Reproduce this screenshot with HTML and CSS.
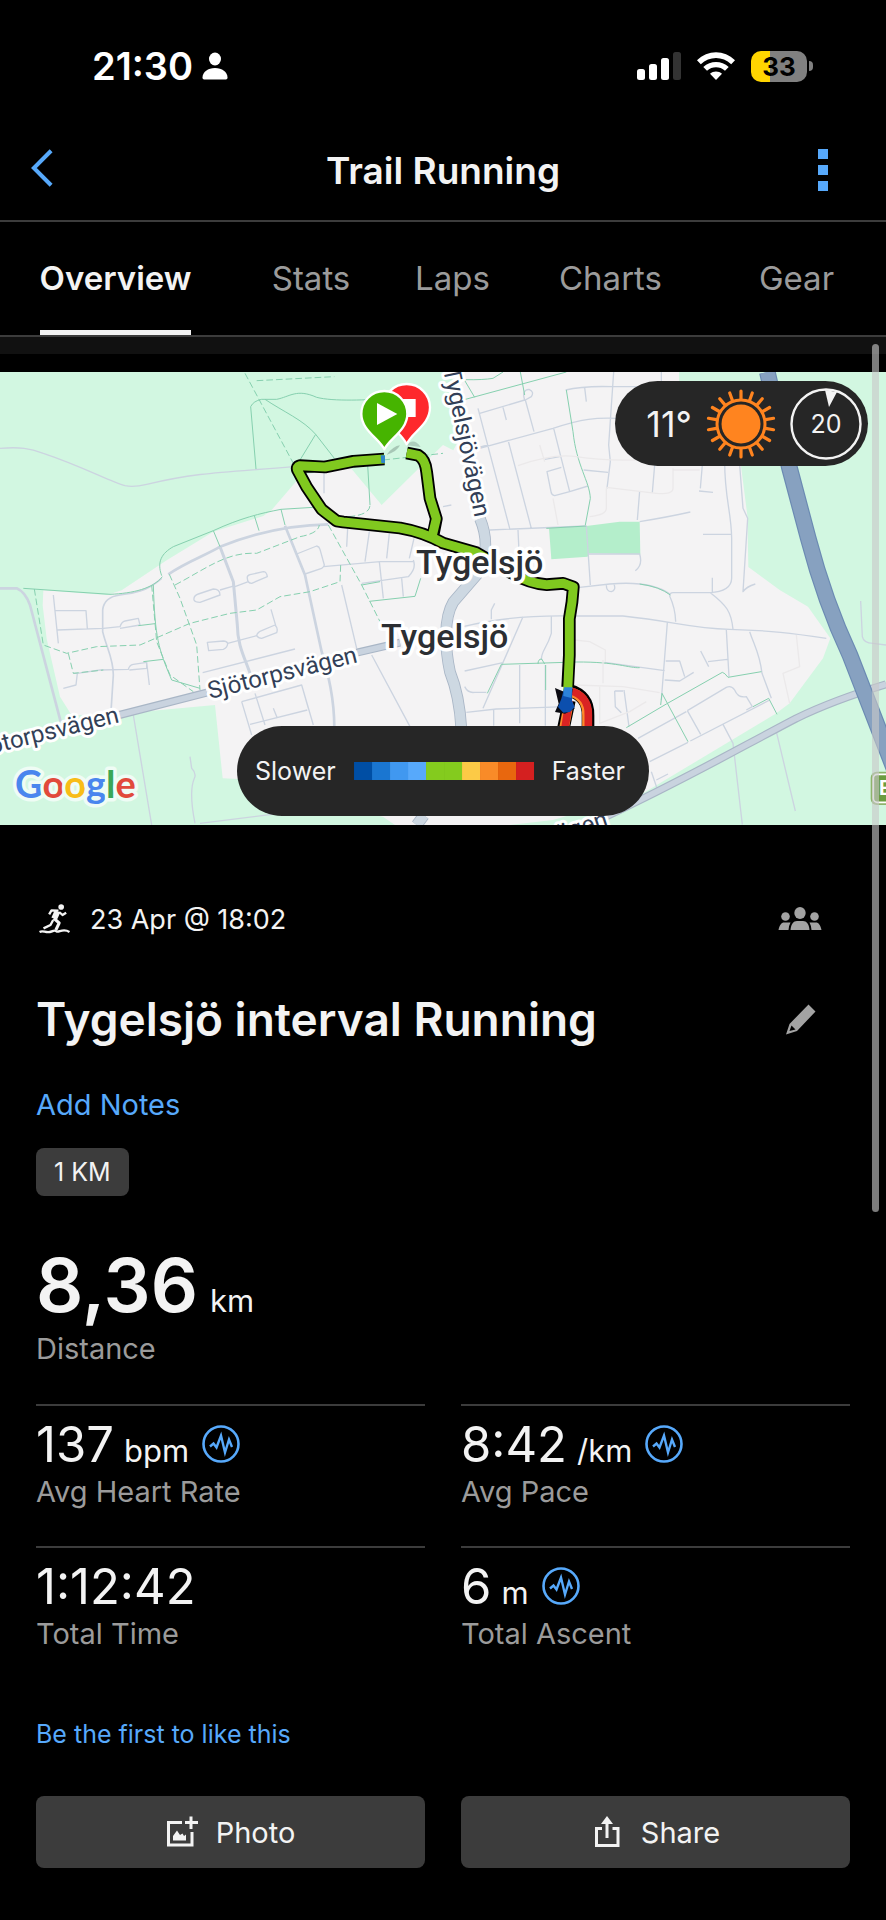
FILE: index.html
```html
<!DOCTYPE html>
<html lang="en">
<head>
<meta charset="utf-8">
<meta name="viewport" content="width=device-width, initial-scale=1">
<title>Trail Running</title>
<link rel="stylesheet" href="styles.css">
</head>
<body>
<svg class="defs" aria-hidden="true">
  <symbol id="pulse" viewBox="0 0 38 38">
    <circle cx="19" cy="19" r="17.5" fill="none" stroke="currentColor" stroke-width="2.6"/>
    <path d="M8 21.500l3.500-3 3 4 4.500-12 4 17 4-13 3 7.500" fill="none" stroke="currentColor" stroke-width="2.400" stroke-linejoin="miter"/>
  </symbol>
</svg>

<header class="top">
  <div class="status">
    <div class="status-left">
      <span class="clock">21:30</span>
      <svg class="person" viewBox="0 0 26 28" fill="#fff"><ellipse cx="13" cy="7" rx="6" ry="6.500"/><path d="M0.500 25.500C.5 20 6 16 13 16s12.500 4 12.500 9.500c0 1.500-.8 2-2.500 2H3c-1.700 0-2.500-.5-2.500-2z"/></svg>
    </div>
    <div class="status-right">
      <svg class="signal" viewBox="0 0 44 28"><g fill="#fff"><rect y="17" width="8" height="11" rx="2.500"/><rect x="12" y="12" width="8" height="16" rx="2.500"/><rect x="24" y="6" width="8" height="22" rx="2.500"/></g><rect x="36" width="8" height="28" rx="2.500" fill="#333"/></svg>
      <svg class="wifi" viewBox="0 0 38 28" fill="#fff"><path d="M19 28l-6-6.200c3.400-3 8.600-3 12 0z"/><path d="M6.300 14.900C13.500 8.300 24.500 8.300 31.700 14.900L28 18.700c-5.200-4.500-12.800-4.500-18 0z"/><path d="M0 8.300C10.700-2.600 27.300-2.600 38 8.300L34.200 12.200C25.600 4 12.400 4 3.800 12.200z"/></svg>
      <div class="battery"><span class="battery-body">33</span><span class="battery-cap"></span></div>
    </div>
  </div>
  <div class="bar">
    <button class="icon-button" aria-label="Back"><svg class="chevron" viewBox="0 0 24 40"><path d="M21 2L3 20l18 18" fill="none" stroke="#57a9fb" stroke-width="4.200"/></svg></button>
    <h1 class="bar-title">Trail Running</h1>
    <button class="icon-button" aria-label="More options"><svg class="dots" viewBox="0 0 10 42" fill="#57a9fb"><rect width="10" height="10"/><rect y="16" width="10" height="10"/><rect y="32" width="10" height="10"/></svg></button>
  </div>
  <nav class="tabs">
    <a class="tab tab-active" href="#overview">Overview</a>
    <a class="tab" href="#stats">Stats</a>
    <a class="tab" href="#laps">Laps</a>
    <a class="tab" href="#charts">Charts</a>
    <a class="tab" href="#gear">Gear</a>
  </nav>
</header>

<main class="page" id="overview">
  <div class="scroll-thumb"></div>
  <div class="strip"></div>
  <section class="map" aria-label="Route map">
    <svg class="map-art" viewBox="0 0 886 453">
      <rect width="886" height="453" fill="#f4f3f4"/>
      <g transform="scale(.33333333)" fill="none" stroke-linejoin="round">
        <g fill="#d2f7e1">
          <path d="M0 0H1345L1385 70 1405 150 1360 235 1329 219 1255 290 1145 399 1050 285 900 310 885 332 815 414 790 432 640 479 500 565 365 655 320 669 130 655 128 700 140 800 180 974 215 1030 360 1025 645 999 668 1219 730 1222 1150 1335 1185 1359H0Z"/>
          <path d="M2037 0H2658V1359H1529L1659 1344 1929 1264 2329 1024 2369 994 2469 859 2491 799 2424 704 2339 654 2245 585 2242 430 2223 282 2150 120 2037 60Z"/>
        </g>
        <path d="M1647 469L1759 462 1859 449 1919 449 1921 547 1766 544 1763 554 1654 562Z" fill="#b4eecb"/>

        <g transform="translate(0 -21)" stroke="#ccd4e0" stroke-width="4">
          <path d="M0 250C60 245 90 250 130 265C250 305 330 350 375 362Q400 368 440 358C600 320 680 322 880 305"/>
          <path d="M505 628C560 590 620 570 660 545C760 505 860 480 985 478" stroke-width="8"/>
          <path d="M660 545L700 650 712 780C712 840 735 880 750 925" stroke-width="9"/>
          <path d="M855 482L915 630 965 860C985 930 1003 1000 1003 1090" stroke-width="8"/>
          <path d="M0 670H50Q75 680 90 720L182 1070" stroke-width="8"/>
          <path d="M890 567L950 543Q958 545 960 553L973 600Q972 606 965 610L915 627M970 605L1140 590H1240M1043 490L1040 545M1108 500L1095 590M1168 505L1160 580M1242 520L1228 580M1240 585Q1250 610 1225 635L1085 655M1138 590L1150 700M1205 640L1210 695M972 320V385M1025 660L1070 850"/>
          <path d="M705 665L745 650M742 640Q740 632 750 629L790 620Q800 620 802 635L755 655Q743 655 742 640ZM582 705Q580 692 595 687L640 672Q660 672 660 690L600 712Q585 712 582 705ZM660 675L705 662"/>
          <path d="M485 640C440 680 400 685 360 690C320 695 310 715 308 735V800C320 850 340 880 340 930L333 1040" stroke-width="5"/>
          <path d="M160 690L175 835M165 737H258L262 790M172 795L310 790 360 785Q365 770 375 768L415 760 420 780 360 790M190 970L228 960 232 925 300 915 385 913Q388 900 400 898L440 892V910L388 915M440 892L448 960M220 925H232"/>
          <path d="M608 923L885 852M683 835Q680 828 670 828L622 832 626 857 670 853Q683 848 683 835L770 812Q772 802 785 797L825 780Q835 790 830 803L785 820Q775 820 770 812M828 785L813 733"/>
          <path d="M725 1010L905 960 940 1080M725 1010L755 1110M750 1078L922 1035M765 985L795 1080M820 1030L832 1060M905 960L925 1030"/>
          <path d="M400 1050L455 1380M570 1175L575 1210Q590 1225 583 1240C570 1270 572 1310 585 1375M600 1375L840 1345M1115 870L1230 1085"/>
        </g>
        <g transform="translate(0 -21)" stroke="#86d0af" stroke-width="3">
          <path d="M768 312L752 125Q760 108 785 103H830C870 95 890 70 950 97C1000 110 1100 105 1180 100M795 103C850 140 910 165 947 208L1003 280M947 208L900 285M485 632C470 590 485 565 520 545L640 497C720 460 780 445 843 433L940 427M640 497L660 545M763 452L777 497M843 433L855 480M487 635C460 670 400 685 330 688L70 670M1103 300L1110 420"/>
          <path d="M735 25L880 295M770 47L1003 35M985 480L1085 660 1140 770M525 660C620 610 680 560 770 565L900 515Q955 505 958 480M1045 455Q1110 450 1110 420M1150 285L1329 265M103 672L130 840 200 865 290 845 420 840 570 775 690 745 770 735 840 695 930 680 1020 650 1022 600M508 628L540 700 590 840 600 975M455 660L470 830 510 930 580 980M205 865L220 925 310 915" stroke-dasharray="20 9"/>
          <path d="M460 660C465 820 475 850 515 945L600 970M415 782L465 776M430 890L490 883M1085 660L1140 650M1108 709L1245 694 1262 640" />
        </g>

        <g transform="translate(1329 -21)" stroke="#ccd4e0" stroke-width="4">
          <path d="M110 145L245 105Q235 75 258 73Q275 80 265 95L247 105 273 200M105 130L200 490M110 250L330 190C420 160 460 158 520 160M180 127L190 165M195 225L265 490M332 190L380 380L335 392Q325 390 324 380L312 320 355 307M305 283L350 275M380 380L435 363M425 68L430 110M368 75Q420 62 510 65H660M512 21L497 240 502 290 492 370M422 315L495 322M655 21V60M635 300L628 383M768 378L810 382M778 300L772 370M590 378L583 465M590 470Q680 455 742 441M140 495L430 483M225 495L228 560M430 483L442 660M437 567H590Q600 600 577 617M780 508H865M845 290C845 400 865 440 866 520V640Q865 680 800 683H690Q680 683 680 693Q697 730 698 770M802 683C850 720 865 740 870 793M808 638V683M890 300L900 430 914 460 900 680Q910 665 937 657M410 667L500 657C600 648 650 665 682 688M490 660Q490 680 505 680Q520 675 513 657M0 425L25 420M95 250L135 240"/>
          <path d="M370 75L390 200C400 300 440 350 442 400L427 480M68 44Q120 45 150 40L180 21M60 105L370 21M232 21L245 90M310 490L430 483M590 657Q650 665 682 690M50 21L95 97" stroke="#86d0af" stroke-width="3"/>
          <path d="M225 302Q330 265 400 275C500 290 600 285 620 283M345 480L330 400M290 240L305 290M490 370V430Q490 450 440 455M490 367L640 385Q690 390 690 370V310M690 315H770" stroke="#ebe9ea"/>
        </g>
        <g transform="translate(1329 654)" stroke="#ccd4e0" stroke-width="4">
          <path d="M60 110Q200 75 380 78H540C700 95 740 115 860 118S1050 130 1150 145M145 88V60L155 40M240 80L120 355M325 78V130C310 180 295 180 295 210M65 243L180 218M65 290Q75 310 95 307H130M70 367L160 357 370 350M152 360V407M230 225V400M307 225V407M673 98L655 330M668 213H710L725 260M665 270L710 273 752 247M773 183L797 230M795 215L853 208M850 120L858 260M920 125C935 170 950 190 957 250L985 325M485 217L665 242M543 300L558 410M515 303H540M515 303L517 350 535 368M585 445L730 365M733 362L850 292Q865 285 875 300Q885 325 910 320L928 350 910 360M733 362L773 433M742 453L980 330M620 515L735 457M840 403L870 460L898 704M640 570L675 552M625 545L642 595M1000 425L1057 663M1253 33L1258 140Q1262 160 1290 160L1329 165"/>
          <path d="M175 223L400 216C520 215 560 235 590 233M175 223L133 310M285 222Q285 207 296 207L305 222M308 225V300M653 345L657 310 735 455M550 413L670 342 838 247Q845 248 855 262L955 245M930 350L977 325 1002 373" stroke="#86d0af" stroke-width="3"/>
          <path d="M395 150L440 155 487 180V215M480 210V280M395 285L540 290 650 308M470 290V400L560 365 610 335M1060 135L1070 230 1020 250 1040 340" stroke="#ebe9ea"/>
        </g>

        <g stroke-linecap="butt">
          <path d="M1440 440C1465 500 1460 560 1430 609L1360 690C1330 740 1335 830 1350 900C1370 950 1380 1000 1384 1070M1272 1330L1250 1359" stroke="#a9b6c6" stroke-width="35"/>
          <path d="M1440 440C1465 500 1460 560 1430 609L1360 690C1330 740 1335 830 1350 900C1370 950 1380 1000 1384 1070M1272 1330L1250 1359" stroke="#cdd8e2" stroke-width="30"/>
          <path d="M358 1029L620 962M1070 842L1200 812M2658 937Q2500 985 2389 1039C2200 1138 2050 1225 1800 1342" stroke="#a9b6c6" stroke-width="24"/>
          <path d="M358 1029L620 962M1070 842L1200 812M2658 937Q2500 985 2389 1039C2200 1138 2050 1225 1800 1342" stroke="#c9d3df" stroke-width="17"/>
          <path d="M2302 0L2367 282 2425 500Q2475 690 2550 850L2690 1210" stroke="#6b8ab2" stroke-width="50"/>
          <path d="M2302 0L2367 282 2425 500Q2475 690 2550 850L2690 1210" stroke="#87a1c0" stroke-width="43"/>
        </g>

        <path d="M1708 955C1745 965 1765 990 1764 1030V1080M1708 985L1688 1080" stroke="#000" stroke-width="38"/>
        <path d="M1708 960C1740 965 1762 990 1761 1030V1080M1706 995L1690 1080" stroke="#fd8a2a" stroke-width="29"/>
        <path d="M1708 955C1745 965 1767 990 1765 1030V1080M1708 985L1693 1080" stroke="#d92323" stroke-width="23"/>
        <path d="M1153 261L1060 268 975 285 900 281Q888 284 893 295L920 345 965 412 1010 447 1030 450 1200 468Q1270 480 1329 513L1429 542 1529 600Q1590 636 1640 638L1690 634 1720 645 1716 690 1708 740 1708 850 1703 945M1220 243L1255 250Q1276 262 1280 300L1290 379 1309 440 1300 485" stroke="#000" stroke-width="38"/>
        <path d="M1153 261L1060 268 975 285 900 281Q888 284 893 295L920 345 965 412 1010 447 1030 450 1200 468Q1270 480 1329 513L1429 542 1529 600Q1590 636 1640 638L1690 634 1720 645 1716 690 1708 740 1708 850 1703 957M1220 243L1255 250Q1276 262 1280 300L1290 379 1309 440 1297 490" stroke="#80c91f" stroke-width="27"/>
        <path d="M1142 250H1155V273H1144Z" fill="#2f86c9"/>
        <path d="M1665 948L1694 960 1718 950 1712 990 1724 1010 1695 1025 1665 1020 1676 995Z" fill="#0b0b12"/>
        <path d="M1692 950H1717L1716 985 1724 1005 1710 1020 1690 1022 1674 1005 1684 980Z" fill="#0c4fae"/>
        <path d="M1692 946H1717L1714 978 1690 972Z" fill="#2c83da"/>

        <path d="M1160 248Q1180 222 1200 220Q1190 240 1160 248Z" fill="#8aa79a" opacity=".6"/>
        <path d="M1220 220Q1240 195 1262 225Z" fill="#8aa79a" opacity=".5"/>
        <path d="M1220 217C1205 180 1150 160 1150 106a70 70 0 0 1 140 0C1290 160 1235 180 1220 217Z" fill="#fe282c" stroke="#fff" stroke-width="7"/>
        <path d="M1193 81h54v54h-54z" fill="#fff"/>
        <path d="M1153 232C1138 200 1084 175 1084 126a69 69 0 0 1 138 0C1222 175 1168 200 1153 232Z" fill="#46b400" stroke="#fff" stroke-width="7"/>
        <path d="M1131 93L1192 126 1131 159Z" fill="#fff"/>
        <rect x="2612" y="1199" width="90" height="100" rx="18" fill="#8fb36c"/>
        <rect x="2620" y="1207" width="80" height="84" rx="12" fill="#6c9c41" stroke="#fff" stroke-width="5"/>
      </g>
      <g class="road-label">
        <text transform="translate(443 -3) rotate(78)">Tygelsjövägen</text>
        <text transform="translate(210 327) rotate(-14)">Sjötorpsvägen</text>
        <text transform="translate(120 350) rotate(-14)" text-anchor="end">Sjötorpsvägen</text>
        <text transform="translate(609 454) rotate(-18)" text-anchor="end">vägen</text>
      </g>
      <g class="place-label">
        <text x="416" y="202">Tygelsjö</text>
        <text x="381" y="276">Tygelsjö</text>
      </g>
      <text class="shield" x="879" y="423">E</text>
      <text class="brand" x="15" y="426"><tspan fill="#4a86ee">G</tspan><tspan fill="#e14a3c">o</tspan><tspan fill="#f8bd17">o</tspan><tspan fill="#4a86ee">g</tspan><tspan fill="#3aa757">l</tspan><tspan fill="#e14a3c">e</tspan></text>
    </svg>
    <div class="weather">
      <span class="temp">11°</span>
      <svg class="sun" viewBox="-35 -35 70 70"><circle r="19.500" fill="#ff841f"/><circle r="24" fill="none" stroke="#ff841f" stroke-width="3"/><g stroke="#ff841f" stroke-width="3.200" stroke-linecap="round"><path d="M0-25V-33M0 25V33"/><path d="M0-25V-33M0 25V33" transform="rotate(20)"/><path d="M0-25V-33M0 25V33" transform="rotate(40)"/><path d="M0-25V-33M0 25V33" transform="rotate(60)"/><path d="M0-25V-33M0 25V33" transform="rotate(80)"/><path d="M0-25V-33M0 25V33" transform="rotate(100)"/><path d="M0-25V-33M0 25V33" transform="rotate(120)"/><path d="M0-25V-33M0 25V33" transform="rotate(140)"/><path d="M0-25V-33M0 25V33" transform="rotate(160)"/></g></svg>
      <div class="wind">
        <svg class="wind-ring" viewBox="0 0 72 72"><circle cx="36" cy="36" r="34.500" fill="none" stroke="#f3f3f3" stroke-width="2.400"/><path d="M35 2L47 4 39 19Z" fill="#f3f3f3"/></svg>
        <span class="wind-value">20</span>
      </div>
    </div>
    <div class="legend">
      <span>Slower</span>
      <div class="ramp"><i class="c1"></i><i class="c2"></i><i class="c3"></i><i class="c4"></i><i class="c5"></i><i class="c5"></i><i class="c6"></i><i class="c7"></i><i class="c8"></i><i class="c9"></i></div>
      <span>Faster</span>
    </div>
  </section>

  <section class="summary">
    <div class="meta">
      <svg class="runner" viewBox="26 26 92 93"><circle cx="92" cy="35" r="8.500" fill="#f3f3f3"/><g fill="none" stroke="#f3f3f3" stroke-linejoin="round"><path d="M56 57L63 45 84 46" stroke-width="7"/><path d="M81 48L71 70" stroke-width="18"/><path d="M86 50L96 59 107 52" stroke-width="7"/><path d="M70 69L86 83 76 104" stroke-width="9"/><path d="M68 74L60 89 39 99" stroke-width="7"/><path d="M27 110C38 104 44 113 58 110S72 103 78 108 98 97 117 110" stroke-width="7"/></g></svg>
      <time class="date">23 Apr @ 18:02</time>
      <svg class="people" viewBox="0 0 44 24" fill="#a3a3a3"><ellipse cx="22" cy="6" rx="5.700" ry="6"/><path d="M12.500 23C13 17 15.500 14 19 14h6c3.500 0 6 3 6.500 9z"/><circle cx="7.500" cy="9.500" r="4.300"/><circle cx="36.500" cy="9.500" r="4.300"/><path d="M.5 23C1.500 18 3.500 15.500 6 15.500h6.500Q11 18 10.500 23zM43.500 23C42.500 18 40.500 15.500 38 15.500h-6.500Q33 18 33.500 23z"/></svg>
    </div>
    <div class="name-row">
      <h2 class="name">Tygelsjö interval Running</h2>
      <button class="icon-button" aria-label="Edit name"><svg class="pencil" viewBox="0 0 30 31"><path fill-rule="evenodd" d="M22.500 0.500L29.500 7.500 11 27 0 30.500 3.500 20zM5.500 21.500L3.500 27 9.500 25.500z" fill="#a3a3a3"/></svg></button>
    </div>
    <a class="notes" href="#notes">Add Notes</a>
    <span class="tag">1 KM</span>

    <div class="hero-value"><strong class="hero-number">8,36</strong><span class="unit">km</span></div>
    <div class="label">Distance</div>

    <div class="metrics">
      <div class="metric"><div class="value"><span class="number">137</span><span class="unit">bpm</span><svg class="pulse"><use href="#pulse"/></svg></div><div class="label">Avg Heart Rate</div></div>
      <div class="metric"><div class="value"><span class="number">8:42</span><span class="unit">/km</span><svg class="pulse"><use href="#pulse"/></svg></div><div class="label">Avg Pace</div></div>
      <div class="metric"><div class="value"><span class="number">1:12:42</span></div><div class="label">Total Time</div></div>
      <div class="metric"><div class="value"><span class="number">6</span><span class="unit">m</span><svg class="pulse"><use href="#pulse"/></svg></div><div class="label">Total Ascent</div></div>
    </div>

    <a class="likes" href="#likes">Be the first to like this</a>
    <div class="actions">
      <button class="action"><svg class="action-icon" viewBox="0 0 32 32" fill="none" stroke="#f3f3f3" stroke-width="3"><path d="M16 6.500H2.500V29H26V16M25 0.500V13M19 6.500H32"/><path d="M7 24.500V20L11 14.500 14 19 16.500 17.500 18 20 20 18.500V24.500Z" fill="#f3f3f3" stroke="none"/></svg>Photo</button>
      <button class="action"><svg class="action-icon" viewBox="0 0 32 32" fill="none" stroke="#f3f3f3" stroke-width="3"><path d="M11 12.500H5.500V29.500H27V12.500H21.500M16 22V3"/><path d="M16 0L22 8H10Z" fill="#f3f3f3" stroke="none"/></svg>Share</button>
    </div>
  </section>
</main>
</body>
</html>
```
FILE: styles.css
```css
* { box-sizing: border-box; }
body {
  margin: 0;
  background: #000;
  color: #f3f3f3;
  font-family: Inter, "Liberation Sans", sans-serif;
  font-size: 29px;
}
a { color: inherit; text-decoration: none; }
svg { display: block; flex: none; }
button { font: inherit; color: inherit; border: 0; background: none; padding: 0; }
h1, h2 { margin: 0; }
.defs { position: absolute; width: 0; height: 0; }

.status {
  display: flex;
  justify-content: space-between;
  align-items: center;
  height: 122px;
  padding: 10px 73px 0 92px;
  color: #fff;
}
.status-left, .status-right { display: flex; align-items: center; }
.status-left { gap: 9px; }
.status-right { gap: 16px; }
.clock { font-size: 38px; font-weight: 600; }
.person { width: 26px; height: 28px; }
.signal { width: 44px; height: 28px; }
.wifi { width: 38px; height: 28px; }
.battery { display: flex; align-items: center; gap: 2px; }
.battery-body {
  width: 56px;
  border-radius: 10px;
  background: linear-gradient(90deg, #ffd500 34%, #808080 34%);
  color: #000;
  font-size: 26px;
  line-height: 31px;
  font-weight: 700;
  text-align: center;
}
.battery-cap { width: 4px; height: 10px; border-radius: 0 5px 5px 0; background: #808080; }

.bar {
  display: flex;
  align-items: center;
  justify-content: space-between;
  height: 100px;
  padding: 0 58px 2px 31px;
  border-bottom: 2px solid #3c3c3c;
}
.bar-title { font-size: 37px; font-weight: 600; padding-left: 14px; }
.chevron { width: 23px; height: 40px; margin-bottom: 4px; }
.dots { width: 10px; height: 42px; }

.tabs {
  display: grid;
  grid-template-columns: 231fr 160fr 123fr 193fr 179fr;
  justify-items: center;
  height: 115px;
  border-bottom: 2px solid #3c3c3c;
  color: #9b9b9b;
  font-size: 33px;
}
.tab { display: flex; align-items: center; height: 113px; border-bottom: 5px solid transparent; padding-top: 4px; }
.tab-active { color: #f3f3f3; font-weight: 600; border-color: #f3f3f3; }

.page { position: relative; }
.scroll-thumb {
  position: absolute;
  z-index: 2;
  top: 7px;
  right: 7px;
  width: 7px;
  height: 868px;
  border-radius: 4px;
  background: rgba(200, 200, 200, .62);
}
.strip { height: 35px; background: linear-gradient(#111 17px, #000 17px); }

.map { position: relative; }
.map-art { width: 100%; height: auto; }
.map-art text { font-family: Roboto, Inter, sans-serif; paint-order: stroke; stroke: #fff; stroke-linejoin: round; }
.road-label { font-size: 24px; fill: #333f57; }
.road-label text { stroke-width: 6px; }
.place-label { font-size: 34px; font-weight: 500; fill: #2c2f33; }
.place-label text { stroke-width: 7px; }
.map-art .brand { font-family: Lato, sans-serif; font-size: 38px; font-weight: 700; stroke-width: 7px; stroke: #effcf5; }
.map-art .shield { font-size: 20px; font-weight: 700; fill: #fff; stroke: none; }

.weather, .legend {
  position: absolute;
  display: flex;
  align-items: center;
  border-radius: 45px;
  background: #262626;
}
.weather { top: 9px; right: 18px; height: 85px; padding: 0 6px 0 31px; gap: 14px; }
.temp { font-size: 36px; }
.sun { width: 70px; height: 70px; }
.wind { display: grid; place-items: center; }
.wind-ring, .wind-value { grid-area: 1 / 1; }
.wind-ring { width: 72px; height: 72px; }
.wind-value { font-size: 25px; }
.legend {
  bottom: 9px;
  left: 50%;
  transform: translateX(-50%);
  height: 90px;
  padding: 0 24px 0 18px;
  gap: 18px;
  font-size: 25px;
}
.ramp { display: flex; }
.ramp i { width: 18px; height: 18px; }
.c1 { background: #004ea4; }
.c2 { background: #1a76d1; }
.c3 { background: #4098f0; }
.c4 { background: #57a9fb; }
.c5 { background: #84cb1e; }
.c6 { background: #fcca46; }
.c7 { background: #f98b28; }
.c8 { background: #e8670e; }
.c9 { background: #d42020; }

.summary { padding: 70px 36px 52px; }
.meta { display: flex; align-items: center; height: 48px; padding-right: 28px; }
.runner { width: 31px; height: 31px; margin: 0 20px 0 3px; }
.date { font-size: 27px; }
.people { width: 44px; height: 24px; margin-left: auto; }
.name-row { display: flex; align-items: center; justify-content: space-between; height: 64px; margin-top: 44px; padding-right: 34px; }
.name { font-size: 46px; font-weight: 600; }
.pencil { width: 30px; height: 31px; }
.notes { display: block; margin-top: 34px; color: #57a9fb; line-height: 40px; }
.tag {
  display: block;
  width: fit-content;
  margin-top: 23px;
  padding: 0 18px;
  border-radius: 8px;
  background: #3c3c3c;
  font-size: 25px;
  line-height: 48px;
}
.hero-value { display: flex; align-items: baseline; gap: 12px; height: 94px; margin-top: 42px; line-height: 94px; }
.hero-number { font-size: 74px; font-weight: 600; }
.unit { font-size: 31px; }
.label { color: #9b9b9b; line-height: 34px; }

.metrics { display: grid; grid-template-columns: 1fr 1fr; column-gap: 36px; margin-top: 38px; }
.metric { height: 142px; padding-top: 11px; border-top: 2px solid #3c3c3c; }
.value { display: flex; align-items: baseline; gap: 10px; height: 56px; line-height: 56px; }
.number { font-size: 49px; }
.pulse { width: 38px; height: 38px; align-self: center; margin: 0 0 3px 3px; color: #57a9fb; }
.metric .label { margin-top: 2px; }

.likes { display: block; margin-top: 28px; color: #57a9fb; font-size: 25px; line-height: 36px; }
.actions { display: grid; grid-template-columns: 1fr 1fr; gap: 36px; margin-top: 44px; }
.action {
  display: flex;
  align-items: center;
  justify-content: center;
  gap: 18px;
  height: 72px;
  border-radius: 8px;
  background: #3c3c3c;
}
.action-icon { width: 32px; height: 32px; }
```
